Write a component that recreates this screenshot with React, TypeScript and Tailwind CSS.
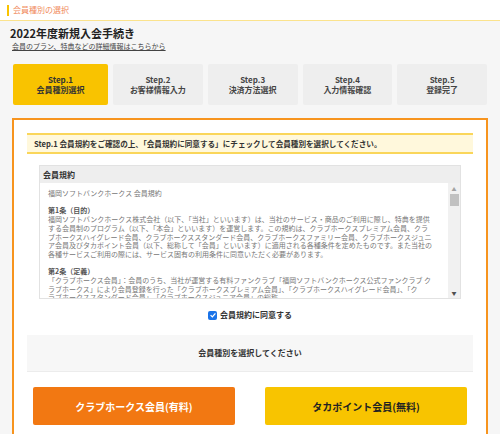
import React from 'react';

const steps = [
  { no: 'Step.1', label: '会員種別選択' },
  { no: 'Step.2', label: 'お客様情報入力' },
  { no: 'Step.3', label: '決済方法選択' },
  { no: 'Step.4', label: '入力情報確認' },
  { no: 'Step.5', label: '登録完了' },
];

const art1 = [
  '福岡ソフトバンクホークス株式会社（以下、「当社」といいます）は、当社のサービス・商品のご利用に際し、特典を提供',
  'する会員制のプログラム（以下、「本会」といいます）を運営します。この規約は、クラブホークスプレミアム会員、クラ',
  'ブホークスハイグレード会員、クラブホークススタンダード会員、クラブホークスファミリー会員、クラブホークスジュニ',
  'ア会員及びタカポイント会員（以下、総称して「会員」といいます）に適用される各種条件を定めたものです。また当社の',
  '各種サービスご利用の際には、サービス固有の利用条件に同意いただく必要があります。',
];

const art2 = [
  '「クラブホークス会員」：会員のうち、当社が運営する有料ファンクラブ「福岡ソフトバンクホークス公式ファンクラブ ク',
  'ラブホークス」により会員登録を行った「クラブホークスプレミアム会員」、「クラブホークスハイグレード会員」、「ク',
  'ラブホークススタンダード会員」、「クラブホークスジュニア会員」の総称',
];

export default function App() {
  return (
    <div className="w-[500px] h-[434px] overflow-hidden bg-[#f6f6f6] text-[#333] font-['Noto_Sans_CJK_JP','Noto_Sans',sans-serif]">
      {/* ページ見出し */}
      <div className="h-[21px] bg-white border-b border-[#fbe38d] flex items-center pl-[7px]">
        <span className="w-[2px] h-[11px] bg-[#f9c300]"></span>
        <span className="ml-[4px] text-[8px] leading-none text-[#f08a5d]">会員種別の選択</span>
      </div>

      <div className="pt-[6px] pl-[10px]">
        <h1 className="text-[11px] leading-[12px] font-bold text-[#222]">2022年度新規入会手続き</h1>
        <p className="mt-[3px] ml-[2px] text-[7px] leading-[8px] underline text-[#444]">会員のプラン、特典などの詳細情報はこちらから</p>
      </div>

      {/* ステップ */}
      <div className="mt-[14px] px-[13px] flex gap-[5px]">
        {steps.map((s, i) => (
          <div
            key={s.no}
            className={
              i === 0
                ? 'w-[95px] h-[41px] rounded-[2px] bg-[#f9c300] flex flex-col items-center justify-center text-[8px] leading-[10px] font-bold text-[#333]'
                : 'flex-1 h-[41px] rounded-[2px] bg-[#eeeeee] flex flex-col items-center justify-center text-[8px] leading-[10px] font-bold text-[#444]'
            }
          >
            <span>{s.no}</span>
            <span>{s.label}</span>
          </div>
        ))}
      </div>

      {/* メインカード */}
      <div className="mt-[13px] mx-[12px] border-2 border-[#f7941e] bg-white px-[13px] pt-[13px] pb-[20px]">
        <div className="h-[21px] border-y-2 border-[#fad65a] bg-[#fff8dc] px-[7px] flex items-center text-[7.6px] font-bold text-[#333] whitespace-nowrap">
          Step.1 会員規約をご確認の上、「会員規約に同意する」にチェックして会員種別を選択してください。
        </div>

        {/* 会員規約 */}
        <div className="mt-[11px] mx-[12px] border border-[#e2e2e2]">
          <div className="h-[17px] bg-[#eeeeee] px-[3px] flex items-center text-[8px] font-bold text-[#333]">会員規約</div>
          <div className="h-[115px] flex">
            <div className="flex-1 overflow-hidden pl-[8px] pt-[6px] text-[7px] leading-[8.7px] text-[#777] whitespace-nowrap">
              <div>福岡ソフトバンクホークス 会員規約</div>
              <div className="h-[8.7px]"></div>
              <div className="font-bold text-[#555]">第1条（目的）</div>
              {art1.map(l => (
                <div key={l}>{l}</div>
              ))}
              <div className="h-[8.7px]"></div>
              <div className="font-bold text-[#555]">第2条（定義）</div>
              {art2.map(l => (
                <div key={l}>{l}</div>
              ))}
            </div>
            <div className="w-[12px] bg-[#f1f1f1] flex flex-col items-center">
              <span className="mt-[3px] text-[5px] leading-[6px] text-[#a3a3a3]">▲</span>
              <div className="mt-[2px] w-[9px] h-[12px] bg-[#c1c1c1]"></div>
              <div className="flex-1"></div>
              <span className="mb-[2px] text-[5px] leading-[6px] text-[#505050]">▼</span>
            </div>
          </div>
        </div>

        {/* 同意チェック */}
        <div className="mt-[10px] h-[12px] flex items-center justify-center gap-[3px]">
          <span className="w-[9px] h-[9px] rounded-[2px] bg-[#1a73e8] flex items-center justify-center">
            <svg viewBox="0 0 10 10" className="w-[8px] h-[8px]">
              <path d="M2 5.2 L4.2 7.3 L8 3" fill="none" stroke="#fff" strokeWidth="1.6" />
            </svg>
          </span>
          <span className="text-[8px] font-bold text-[#333]">会員規約に同意する</span>
        </div>

        <div className="mt-[14px] h-[37px] bg-[#f7f7f7] border-b border-[#ececec] flex items-center justify-center text-[8px] font-bold text-[#333]">
          会員種別を選択してください
        </div>

        {/* 会員種別ボタン */}
        <div className="mt-[15px] px-[6px] grid grid-cols-2 gap-[30px]">
          <button className="h-[38px] rounded-[2px] bg-[#f27812] text-white text-[10px] font-bold">クラブホークス会員(有料)</button>
          <button className="h-[38px] rounded-[2px] bg-[#f8c400] text-[#222] text-[10px] font-bold">タカポイント会員(無料)</button>
        </div>
      </div>
    </div>
  );
}
